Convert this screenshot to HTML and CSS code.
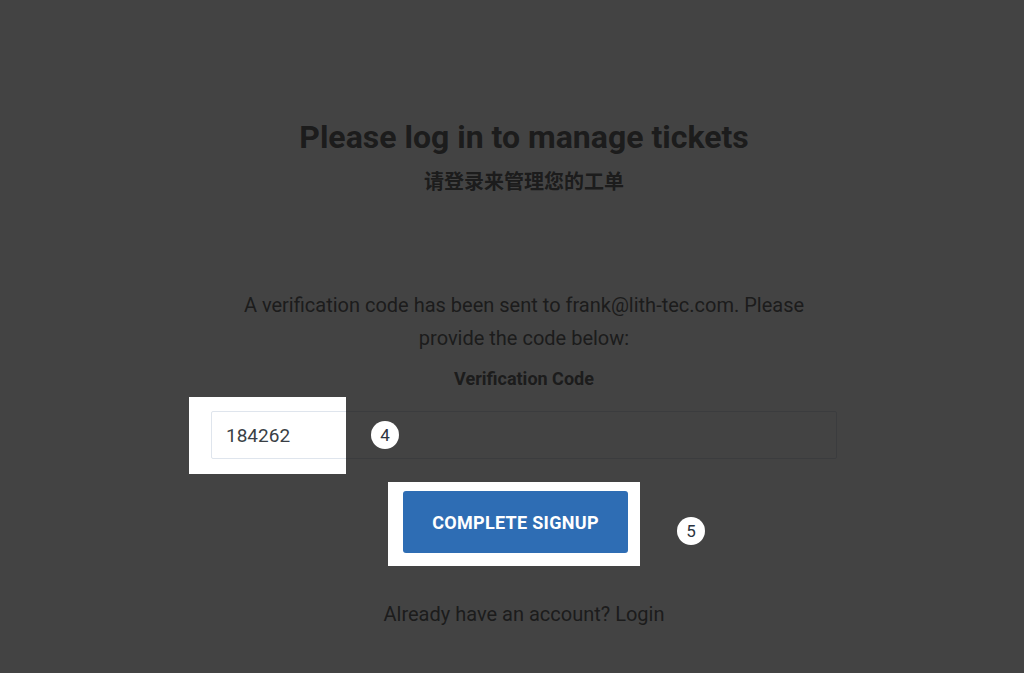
FILE: index.html
```html
<!DOCTYPE html>
<html lang="en">
<head>
<meta charset="utf-8">
<title>Login</title>
<link rel="stylesheet" href="styles.css">
</head>
<body>
<div class="page">
  <main class="content">
    <h1 class="title">Please log in to manage tickets</h1>
    <h2 class="subtitle">请登录来管理您的工单</h2>
    <p class="message">A verification code has been sent to frank@lith-tec.com. Please provide the code below:</p>
    <label class="label" for="code">Verification Code</label>
    <div class="input" id="code">184262</div>
    <button class="btn">COMPLETE SIGNUP</button>
    <p class="login">Already have an account? Login</p>
  </main>
</div>
<div class="mask"></div>
<span class="badge badge-4">4</span>
<span class="badge badge-5">5</span>
</body>
</html>
```
FILE: styles.css
```css
html, body {
  margin: 0;
  padding: 0;
  width: 1024px;
  height: 673px;
  overflow: hidden;
  background: #ffffff;
  font-family: Roboto, "Noto Sans CJK SC", sans-serif;
}

.page {
  display: flex;
  justify-content: center;
  padding-left: 24px;
}

.content {
  width: 626px;
  display: flex;
  flex-direction: column;
  align-items: center;
  padding-top: 117px;
  color: #6c6c6c;
}

.title {
  margin: 0;
  font-size: 32px;
  line-height: 40px;
  font-weight: 700;
}

.subtitle {
  margin: 10px 0 0;
  font-family: "Noto Sans CJK SC", sans-serif;
  font-size: 20px;
  line-height: 28px;
  font-weight: 700;
}

.message {
  margin: 94px 0 0;
  width: 600px;
  text-align: center;
  font-size: 20px;
  line-height: 33px;
}

.label {
  margin-top: 12px;
  font-size: 18px;
  line-height: 24px;
  font-weight: 700;
}

.input {
  margin-top: 20px;
  box-sizing: border-box;
  width: 626px;
  height: 48px;
  border: 1px solid #dfe5ed;
  border-radius: 2px;
  padding: 0 14px;
  display: flex;
  align-items: center;
  font-size: 19px;
  color: #3a3f45;
  background: #fff;
}

.btn {
  margin: 32px 17px 0 0;
  width: 225px;
  height: 62px;
  border: none;
  border-radius: 3px;
  background: #2e6db4;
  color: #fff;
  font-family: Roboto, sans-serif;
  font-size: 18px;
  font-weight: 700;
  letter-spacing: 0.3px;
}

.login {
  margin: 48px 0 0;
  font-size: 20px;
  line-height: 26px;
}

.mask {
  position: absolute;
  left: 0;
  top: 0;
  width: 1024px;
  height: 673px;
  background: rgba(0, 0, 0, 0.737);
  clip-path: path(evenodd, "M0 0H1024V673H0Z M189 397H346V474H189Z M388 482H640V566H388Z");
}

.badge {
  position: absolute;
  width: 28px;
  height: 28px;
  border-radius: 50%;
  background: #fff;
  color: #2b3440;
  font-size: 17px;
  line-height: 28px;
  text-align: center;
}

.badge-4 { left: 371px; top: 421px; }
.badge-5 { left: 677px; top: 517px; }
```
